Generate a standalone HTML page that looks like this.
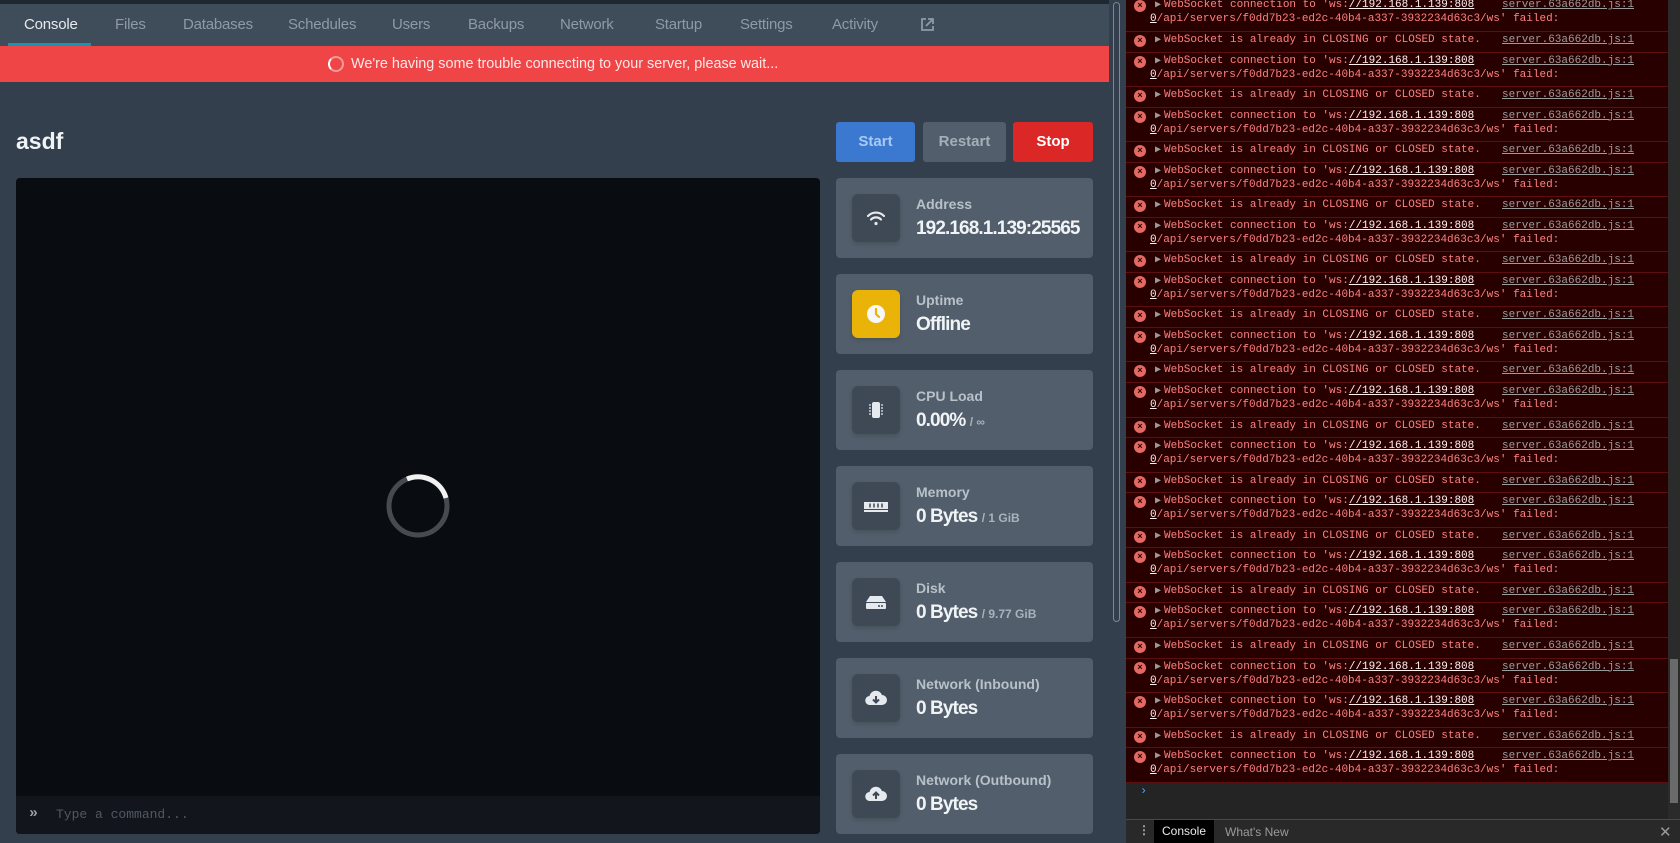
<!DOCTYPE html>
<html><head><meta charset="utf-8"><style>
*{box-sizing:border-box;margin:0;padding:0}
body{width:1680px;height:843px;overflow:hidden;background:#333f4c;font-family:"Liberation Sans",sans-serif;position:relative}
.top{position:absolute;left:0;top:0;width:1109px;height:4px;background:#1f2730}
.nav{position:absolute;left:0;top:4px;width:1109px;height:42px;background:#3f4c59}
.nav span{position:absolute;top:12px;font-size:15px;color:#8d9aa7;letter-spacing:-0.2px}
.nav .act{color:#e5ebf0}
.ul{position:absolute;left:8px;top:39px;width:83px;height:3px;background:#1395b6}
.alert{position:absolute;left:0;top:46px;width:1109px;height:36px;background:#f04546;color:#fde8e8;font-size:14.4px}
.alert .t{position:absolute;left:351px;top:10px}
.sp{position:absolute;left:328px;top:10px;width:16px;height:16px;border-radius:50%;border:2px solid #f59a9a;border-left-color:#fff}
h1{position:absolute;left:16px;top:128px;font-size:23px;color:#f0f3f6;font-weight:bold}
.btn{position:absolute;top:122px;height:40px;border-radius:3px;font-size:15px;font-weight:bold;text-align:center;line-height:40px}
.term{position:absolute;left:16px;top:178px;width:804px;height:656px;background:#090c11;border-radius:4px;overflow:hidden}
.inp{position:absolute;left:0;bottom:0;width:100%;height:38px;background:#12161c;font-family:"Liberation Mono",monospace;font-size:13px;color:#515861}
.card{position:absolute;left:836px;width:257px;height:80px;background:#525e6b;border-radius:4px}
.ib{position:absolute;left:16px;top:16px;width:48px;height:48px;border-radius:6px;background:#3e4955;box-shadow:0 2px 4px rgba(0,0,0,.15)}
.ib svg{position:absolute;left:12px;top:12px}
.lb{position:absolute;left:80px;top:18px;font-size:14px;font-weight:bold;color:#b8c1ca}
.vl{position:absolute;left:80px;top:40px;font-size:19px;font-weight:bold;color:#f1f4f7;white-space:nowrap;letter-spacing:-0.9px}
.vl small{font-size:12px;color:#a9b3bd;font-weight:bold;letter-spacing:0}
.msb{position:absolute;left:1113px;top:2px;width:7px;height:620px;border:1px solid #7b8793;border-radius:4px}
.dev{position:absolute;left:1126px;top:0;width:554px;height:843px;background:#242424;overflow:hidden;font-family:"Liberation Mono",monospace;font-size:11px}
.list{position:absolute;left:0;top:-2.6px;width:542px}
.e{position:relative;background:#290000;border-bottom:1px solid #5c0f0f;color:#ff8080;white-space:pre}
.c{height:34.5px}.s{height:20.6px}
.e i{position:absolute;left:8px;top:3px;width:12px;height:12px;border-radius:50%;background:#e46962;color:#290000;font-style:normal;font-size:9px;line-height:12px;text-align:center;font-weight:bold}
.e b{position:absolute;left:29px;top:2px;font-size:10px;color:#9a9a9a;font-weight:normal}
.l1{position:absolute;left:38px;top:2px}
.l2{position:absolute;left:24px;top:16px}
.e u{color:#fff0f0}
.src{position:absolute;left:376px;top:2px;color:#9c9c9c;text-decoration:underline}
.prompt{position:absolute;left:14px;top:784px;color:#5b9cf5;font-size:12px}
.dsb{position:absolute;left:542px;top:0;width:12px;height:819px;background:#2b2b2b}
.thumb{position:absolute;left:2px;top:659px;width:8px;height:144px;background:#6a6a6a}
.tabs{position:absolute;left:0;top:819px;width:554px;height:24px;background:#292929;border-top:1px solid #494949;font-family:"Liberation Sans",sans-serif;font-size:12px;color:#9a9a9a}
</style></head><body>
<div class="top"></div>
<div class="nav">
<span class="act" style="left:24px">Console</span>
<span style="left:115px">Files</span>
<span style="left:183px">Databases</span>
<span style="left:288px">Schedules</span>
<span style="left:392px">Users</span>
<span style="left:468px">Backups</span>
<span style="left:560px">Network</span>
<span style="left:655px">Startup</span>
<span style="left:740px">Settings</span>
<span style="left:832px">Activity</span>
<svg style="position:absolute;left:920px;top:13px" width="15" height="15" viewBox="0 0 15 15" fill="none" stroke="#8d9aa7" stroke-width="1.8"><path d="M6 2H2v11h11V9M8 2h5v5M13 2L6 9"/></svg>
<div class="ul"></div>
</div>
<div class="alert"><div class="sp"></div><div class="t">We're having some trouble connecting to your server, please wait...</div></div>
<h1>asdf</h1>
<div class="btn" style="left:836px;width:79px;background:#3b78d0;color:#a9c9f2">Start</div>
<div class="btn" style="left:923px;width:83px;background:#525e6b;color:#a5afba">Restart</div>
<div class="btn" style="left:1013px;width:80px;background:#dc2727;color:#fff">Stop</div>
<div class="term">
<svg style="position:absolute;left:370px;top:296px" width="64" height="64" viewBox="0 0 64 64"><circle cx="32" cy="32" r="29" fill="none" stroke="#474b50" stroke-width="5"/><path d="M21 5A29 29 0 0 1 60 24" fill="none" stroke="#f2f2f2" stroke-width="5"/></svg>
<div class="inp"><span style="position:absolute;left:13px;top:9px;color:#9aa1a8;font-weight:bold;font-size:15px">»</span><span style="position:absolute;left:40px;top:11px">Type a command...</span></div>
</div>

<div class="card" style="top:178px"><div class="ib"><svg width="24" height="24" viewBox="0 0 24 24" fill="none" stroke="#e6e9ed" stroke-width="2.2" stroke-linecap="round"><path d="M4 10a11 11 0 0 1 16 0M7 13.5a7 7 0 0 1 10 0"/><circle cx="12" cy="17.5" r="1.6" fill="#e6e9ed" stroke="none"/></svg></div><div class="lb">Address</div><div class="vl">192.168.1.139:25565</div></div>
<div class="card" style="top:274px"><div class="ib" style="background:#eab308"><svg width="24" height="24" viewBox="0 0 24 24"><circle cx="12" cy="12" r="9" fill="#f7f7f7"/><path d="M12 7v5l3 3" fill="none" stroke="#eab308" stroke-width="2.2" stroke-linecap="round"/></svg></div><div class="lb">Uptime</div><div class="vl">Offline</div></div>
<div class="card" style="top:370px"><div class="ib"><svg width="24" height="24" viewBox="0 0 24 24"><rect x="8" y="4" width="8" height="16" rx="2" fill="#e6e9ed"/><path d="M5 7h2M5 10h2M5 13h2M5 16h2M17 7h2M17 10h2M17 13h2M17 16h2" stroke="#e6e9ed" stroke-width="1.2"/></svg></div><div class="lb">CPU Load</div><div class="vl">0.00% <small>/ ∞</small></div></div>
<div class="card" style="top:466px"><div class="ib"><svg width="24" height="24" viewBox="0 0 24 24"><rect x="0" y="8" width="24" height="7" fill="#e6e9ed"/><rect x="0" y="16" width="24" height="2" fill="#e6e9ed"/><path d="M6 9.5v4M10 9.5v4M14 9.5v4M18 9.5v4" stroke="#3e4955" stroke-width="1.5"/></svg></div><div class="lb">Memory</div><div class="vl">0 Bytes <small>/ 1 GiB</small></div></div>
<div class="card" style="top:562px"><div class="ib"><svg width="24" height="24" viewBox="0 0 24 24"><path d="M6 6h12l4 6H2z" fill="#e6e9ed"/><rect x="2" y="13" width="20" height="6" rx="1" fill="#e6e9ed"/><circle cx="15" cy="16" r="1" fill="#3e4955"/><circle cx="18" cy="16" r="1" fill="#3e4955"/></svg></div><div class="lb">Disk</div><div class="vl">0 Bytes <small>/ 9.77 GiB</small></div></div>
<div class="card" style="top:658px"><div class="ib"><svg width="24" height="24" viewBox="0 0 24 24"><path d="M6 19a4.5 4.5 0 0 1-.5-9A6.5 6.5 0 0 1 18 9a5 5 0 0 1 0 10z" fill="#e6e9ed"/><path d="M12 10v6M9 13.5l3 3 3-3" fill="none" stroke="#3e4955" stroke-width="2"/></svg></div><div class="lb">Network (Inbound)</div><div class="vl">0 Bytes</div></div>
<div class="card" style="top:754px"><div class="ib"><svg width="24" height="24" viewBox="0 0 24 24"><path d="M6 19a4.5 4.5 0 0 1-.5-9A6.5 6.5 0 0 1 18 9a5 5 0 0 1 0 10z" fill="#e6e9ed"/><path d="M12 17v-6M9 13.5l3-3 3 3" fill="none" stroke="#3e4955" stroke-width="2"/></svg></div><div class="lb">Network (Outbound)</div><div class="vl">0 Bytes</div></div>
<div class="msb"></div>

<div class="dev">
<div class="list">
<div class="e c"><i>×</i><b>▶</b><span class="l1">WebSocket connection to 'ws:<u>//192.168.1.139:808</u></span><span class="src">server.63a662db.js:1</span><span class="l2"><u>0</u>/api/servers/f0dd7b23-ed2c-40b4-a337-3932234d63c3/ws' failed:</span></div>
<div class="e s"><i>×</i><b>▶</b><span class="l1">WebSocket is already in CLOSING or CLOSED state.</span><span class="src">server.63a662db.js:1</span></div>
<div class="e c"><i>×</i><b>▶</b><span class="l1">WebSocket connection to 'ws:<u>//192.168.1.139:808</u></span><span class="src">server.63a662db.js:1</span><span class="l2"><u>0</u>/api/servers/f0dd7b23-ed2c-40b4-a337-3932234d63c3/ws' failed:</span></div>
<div class="e s"><i>×</i><b>▶</b><span class="l1">WebSocket is already in CLOSING or CLOSED state.</span><span class="src">server.63a662db.js:1</span></div>
<div class="e c"><i>×</i><b>▶</b><span class="l1">WebSocket connection to 'ws:<u>//192.168.1.139:808</u></span><span class="src">server.63a662db.js:1</span><span class="l2"><u>0</u>/api/servers/f0dd7b23-ed2c-40b4-a337-3932234d63c3/ws' failed:</span></div>
<div class="e s"><i>×</i><b>▶</b><span class="l1">WebSocket is already in CLOSING or CLOSED state.</span><span class="src">server.63a662db.js:1</span></div>
<div class="e c"><i>×</i><b>▶</b><span class="l1">WebSocket connection to 'ws:<u>//192.168.1.139:808</u></span><span class="src">server.63a662db.js:1</span><span class="l2"><u>0</u>/api/servers/f0dd7b23-ed2c-40b4-a337-3932234d63c3/ws' failed:</span></div>
<div class="e s"><i>×</i><b>▶</b><span class="l1">WebSocket is already in CLOSING or CLOSED state.</span><span class="src">server.63a662db.js:1</span></div>
<div class="e c"><i>×</i><b>▶</b><span class="l1">WebSocket connection to 'ws:<u>//192.168.1.139:808</u></span><span class="src">server.63a662db.js:1</span><span class="l2"><u>0</u>/api/servers/f0dd7b23-ed2c-40b4-a337-3932234d63c3/ws' failed:</span></div>
<div class="e s"><i>×</i><b>▶</b><span class="l1">WebSocket is already in CLOSING or CLOSED state.</span><span class="src">server.63a662db.js:1</span></div>
<div class="e c"><i>×</i><b>▶</b><span class="l1">WebSocket connection to 'ws:<u>//192.168.1.139:808</u></span><span class="src">server.63a662db.js:1</span><span class="l2"><u>0</u>/api/servers/f0dd7b23-ed2c-40b4-a337-3932234d63c3/ws' failed:</span></div>
<div class="e s"><i>×</i><b>▶</b><span class="l1">WebSocket is already in CLOSING or CLOSED state.</span><span class="src">server.63a662db.js:1</span></div>
<div class="e c"><i>×</i><b>▶</b><span class="l1">WebSocket connection to 'ws:<u>//192.168.1.139:808</u></span><span class="src">server.63a662db.js:1</span><span class="l2"><u>0</u>/api/servers/f0dd7b23-ed2c-40b4-a337-3932234d63c3/ws' failed:</span></div>
<div class="e s"><i>×</i><b>▶</b><span class="l1">WebSocket is already in CLOSING or CLOSED state.</span><span class="src">server.63a662db.js:1</span></div>
<div class="e c"><i>×</i><b>▶</b><span class="l1">WebSocket connection to 'ws:<u>//192.168.1.139:808</u></span><span class="src">server.63a662db.js:1</span><span class="l2"><u>0</u>/api/servers/f0dd7b23-ed2c-40b4-a337-3932234d63c3/ws' failed:</span></div>
<div class="e s"><i>×</i><b>▶</b><span class="l1">WebSocket is already in CLOSING or CLOSED state.</span><span class="src">server.63a662db.js:1</span></div>
<div class="e c"><i>×</i><b>▶</b><span class="l1">WebSocket connection to 'ws:<u>//192.168.1.139:808</u></span><span class="src">server.63a662db.js:1</span><span class="l2"><u>0</u>/api/servers/f0dd7b23-ed2c-40b4-a337-3932234d63c3/ws' failed:</span></div>
<div class="e s"><i>×</i><b>▶</b><span class="l1">WebSocket is already in CLOSING or CLOSED state.</span><span class="src">server.63a662db.js:1</span></div>
<div class="e c"><i>×</i><b>▶</b><span class="l1">WebSocket connection to 'ws:<u>//192.168.1.139:808</u></span><span class="src">server.63a662db.js:1</span><span class="l2"><u>0</u>/api/servers/f0dd7b23-ed2c-40b4-a337-3932234d63c3/ws' failed:</span></div>
<div class="e s"><i>×</i><b>▶</b><span class="l1">WebSocket is already in CLOSING or CLOSED state.</span><span class="src">server.63a662db.js:1</span></div>
<div class="e c"><i>×</i><b>▶</b><span class="l1">WebSocket connection to 'ws:<u>//192.168.1.139:808</u></span><span class="src">server.63a662db.js:1</span><span class="l2"><u>0</u>/api/servers/f0dd7b23-ed2c-40b4-a337-3932234d63c3/ws' failed:</span></div>
<div class="e s"><i>×</i><b>▶</b><span class="l1">WebSocket is already in CLOSING or CLOSED state.</span><span class="src">server.63a662db.js:1</span></div>
<div class="e c"><i>×</i><b>▶</b><span class="l1">WebSocket connection to 'ws:<u>//192.168.1.139:808</u></span><span class="src">server.63a662db.js:1</span><span class="l2"><u>0</u>/api/servers/f0dd7b23-ed2c-40b4-a337-3932234d63c3/ws' failed:</span></div>
<div class="e s"><i>×</i><b>▶</b><span class="l1">WebSocket is already in CLOSING or CLOSED state.</span><span class="src">server.63a662db.js:1</span></div>
<div class="e c"><i>×</i><b>▶</b><span class="l1">WebSocket connection to 'ws:<u>//192.168.1.139:808</u></span><span class="src">server.63a662db.js:1</span><span class="l2"><u>0</u>/api/servers/f0dd7b23-ed2c-40b4-a337-3932234d63c3/ws' failed:</span></div>
<div class="e c"><i>×</i><b>▶</b><span class="l1">WebSocket connection to 'ws:<u>//192.168.1.139:808</u></span><span class="src">server.63a662db.js:1</span><span class="l2"><u>0</u>/api/servers/f0dd7b23-ed2c-40b4-a337-3932234d63c3/ws' failed:</span></div>
<div class="e s"><i>×</i><b>▶</b><span class="l1">WebSocket is already in CLOSING or CLOSED state.</span><span class="src">server.63a662db.js:1</span></div>
<div class="e c"><i>×</i><b>▶</b><span class="l1">WebSocket connection to 'ws:<u>//192.168.1.139:808</u></span><span class="src">server.63a662db.js:1</span><span class="l2"><u>0</u>/api/servers/f0dd7b23-ed2c-40b4-a337-3932234d63c3/ws' failed:</span></div>
</div>
<div class="prompt">›</div>
<div class="dsb"><div class="thumb"></div></div>
<div class="tabs">
<span style="position:absolute;left:12px;top:3px;color:#aaa;font-weight:bold">⋮</span>
<div style="position:absolute;left:28px;top:0;width:60px;height:24px;background:#000;color:#e8e8e8;text-align:center;line-height:22px">Console</div>
<span style="position:absolute;left:99px;top:5px">What's New</span>
<span style="position:absolute;left:533px;top:3px;font-size:15px">✕</span>
</div>
</div>
</body></html>
